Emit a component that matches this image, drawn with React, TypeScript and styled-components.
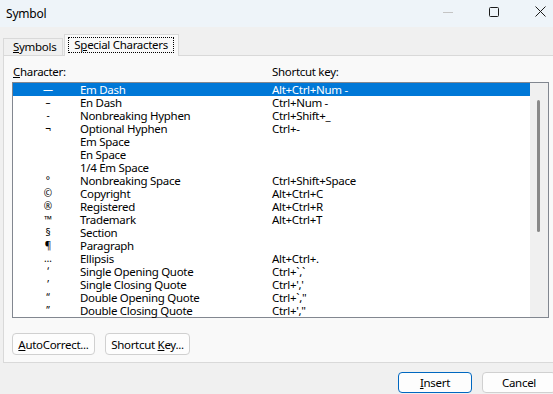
import styled, { createGlobalStyle } from 'styled-components';

const GlobalStyle = createGlobalStyle`
  html, body {
    margin: 0;
    padding: 0;
    background: #f0f0f0;
    overflow: hidden;
  }
  body {
    font-family: "Noto Sans", "Liberation Sans", sans-serif;
    font-size: 11.5px;
    letter-spacing: -0.3px;
    color: #000;
  }
`;

type Row = { sym: string; name: string; keys: string };

const rows: Row[] = [
  { sym: '—', name: 'Em Dash', keys: 'Alt+Ctrl+Num -' },
  { sym: '–', name: 'En Dash', keys: 'Ctrl+Num -' },
  { sym: '-', name: 'Nonbreaking Hyphen', keys: 'Ctrl+Shift+_' },
  { sym: '¬', name: 'Optional Hyphen', keys: 'Ctrl+-' },
  { sym: '', name: 'Em Space', keys: '' },
  { sym: '', name: 'En Space', keys: '' },
  { sym: '', name: '1/4 Em Space', keys: '' },
  { sym: '°', name: 'Nonbreaking Space', keys: 'Ctrl+Shift+Space' },
  { sym: '©', name: 'Copyright', keys: 'Alt+Ctrl+C' },
  { sym: '®', name: 'Registered', keys: 'Alt+Ctrl+R' },
  { sym: '™', name: 'Trademark', keys: 'Alt+Ctrl+T' },
  { sym: '§', name: 'Section', keys: '' },
  { sym: '¶', name: 'Paragraph', keys: '' },
  { sym: '…', name: 'Ellipsis', keys: 'Alt+Ctrl+.' },
  { sym: '‘', name: 'Single Opening Quote', keys: 'Ctrl+`,`' },
  { sym: '’', name: 'Single Closing Quote', keys: "Ctrl+','" },
  { sym: '“', name: 'Double Opening Quote', keys: 'Ctrl+`,"' },
  { sym: '”', name: 'Double Closing Quote', keys: 'Ctrl+\',"' },
];

export default function App() {
  return (
    <>
      <GlobalStyle />
      <Window>
        <TitleBar>
          <Title>Symbol</Title>
          <Controls>
            <CaptionButton>
              <svg width="10" height="10" viewBox="0 0 10 10">
                <line x1="0" y1="5.5" x2="10" y2="5.5" stroke="#c4c4c4" strokeWidth="1" />
              </svg>
            </CaptionButton>
            <CaptionButton>
              <svg width="10" height="10" viewBox="0 0 10 10">
                <rect x="0.5" y="0.5" width="9" height="9" rx="1" fill="none" stroke="#1b1b1b" strokeWidth="1" />
              </svg>
            </CaptionButton>
            <CaptionButton>
              <svg width="11" height="11" viewBox="0 0 11 11">
                <path d="M0.5 0.5 L10.5 10.5 M10.5 0.5 L0.5 10.5" stroke="#1b1b1b" strokeWidth="1" />
              </svg>
            </CaptionButton>
          </Controls>
        </TitleBar>

        <TabStrip>
          <Tab>
            <span>
              <u>S</u>ymbols
            </span>
          </Tab>
          <Tab $active>
            <FocusRing>
              S<u>p</u>ecial Characters
            </FocusRing>
          </Tab>
        </TabStrip>

        <Panel>
          <Headers>
            <Label>
              <u>C</u>haracter:
            </Label>
            <Label>Shortcut key:</Label>
          </Headers>

          <ListBox>
            <Rows>
              {rows.map((r, i) => (
                <ListRow key={r.name} $selected={i === 0}>
                  <Sym>{r.sym}</Sym>
                  <span>{r.name}</span>
                  <span>{r.keys}</span>
                </ListRow>
              ))}
            </Rows>
            <ScrollTrack>
              <Thumb />
            </ScrollTrack>
          </ListBox>

          <PanelButtons>
            <Button $w={83}>
              <span>
                <u>A</u>utoCorrect...
              </span>
            </Button>
            <Button $w={85}>
              <span>
                Shortcut <u>K</u>ey...
              </span>
            </Button>
          </PanelButtons>
        </Panel>

        <Footer>
          <Button $w={74} $h={21} $primary>
            <span>
              <u>I</u>nsert
            </span>
          </Button>
          <Button $w={74} $h={21}>
            <span>Cancel</span>
          </Button>
        </Footer>
      </Window>
    </>
  );
}

const Window = styled.div`
  width: 553px;
  height: 394px;
  overflow: hidden;
  background: #f0f0f0;
`;

const TitleBar = styled.div`
  height: 27px;
  display: flex;
  align-items: center;
  background: #eef4f9;
`;

const Title = styled.span`
  padding-left: 6px;
  font-size: 12px;
  letter-spacing: -0.2px;
`;

const Controls = styled.div`
  margin-left: auto;
  margin-right: -10px;
  display: flex;
  height: 100%;
`;

const CaptionButton = styled.div`
  width: 46px;
  height: 100%;
  display: flex;
  align-items: center;
  justify-content: center;
  padding-bottom: 4px;
  box-sizing: border-box;
`;

const TabStrip = styled.div`
  height: 21px;
  margin-top: 7px;
  padding-left: 3px;
  display: flex;
  align-items: flex-end;
  position: relative;
  z-index: 1;
`;

const Tab = styled.div<{ $active?: boolean }>`
  box-sizing: border-box;
  height: ${(p) => (p.$active ? '22px' : '17px')};
  margin-bottom: ${(p) => (p.$active ? '-1px' : '0')};
  margin-left: ${(p) => (p.$active ? '1px' : '0')};
  padding: ${(p) => (p.$active ? '2px 4px 0 3px' : '0 6px 0 9px')};
  border: 1px solid #d9d9d9;
  border-bottom: none;
  background: ${(p) => (p.$active ? '#f9f9f9' : '#f0f0f0')};
  display: flex;
  align-items: ${(p) => (p.$active ? 'flex-start' : 'center')};
  line-height: 14px;
  white-space: nowrap;
`;

const FocusRing = styled.span`
  border: 1px dotted #000;
  padding: 0 5px 0 5px;
  line-height: 14px;
`;

const Panel = styled.div`
  margin-left: 3px;
  height: 308px;
  box-sizing: border-box;
  border: 1px solid #d9d9d9;
  border-right: none;
  background: #f9f9f9;
  padding-left: 8px;
  display: flex;
  flex-direction: column;
`;

const Headers = styled.div`
  margin-top: 8px;
  height: 16px;
  display: grid;
  grid-template-columns: 259px 1fr;
  align-items: center;
  padding-left: 1px;
`;

const Label = styled.span`
  line-height: 16px;
`;

const ListBox = styled.div`
  margin-top: 2px;
  width: 537px;
  height: 236px;
  box-sizing: border-box;
  border: 1px solid #828790;
  background: #fff;
  display: flex;
`;

const Rows = styled.div`
  width: 517px;
  display: flex;
  flex-direction: column;
`;

const ListRow = styled.div<{ $selected?: boolean }>`
  height: 13px;
  line-height: 13px;
  display: grid;
  grid-template-columns: 67px 192px 1fr;
  background: ${(p) => (p.$selected ? '#0078d7' : 'transparent')};
  color: ${(p) => (p.$selected ? '#fff' : '#000')};
  white-space: nowrap;
`;

const Sym = styled.span`
  text-align: center;
  padding-left: 3px;
  font-size: 10px;
  letter-spacing: 0;
`;

const ScrollTrack = styled.div`
  flex: 1;
  background: #f0f0f0;
  padding-top: 17px;
  padding-left: 7px;
`;

const Thumb = styled.div`
  width: 3px;
  height: 132px;
  border-radius: 2px;
  background: #8a8a8a;
`;

const PanelButtons = styled.div`
  margin-top: 15px;
  display: flex;
  gap: 10px;
`;

const Button = styled.div<{ $w: number; $h?: number; $primary?: boolean }>`
  width: ${(p) => p.$w}px;
  height: ${(p) => p.$h ?? 22}px;
  box-sizing: border-box;
  border: 1px solid ${(p) => (p.$primary ? '#0067c0' : '#d0d0d0')};
  border-radius: 4px;
  background: #fdfdfd;
  display: flex;
  align-items: center;
  justify-content: center;
  white-space: nowrap;
`;

const Footer = styled.div`
  margin-top: 9px;
  margin-right: -3px;
  display: flex;
  justify-content: flex-end;
  gap: 10px;
`;
